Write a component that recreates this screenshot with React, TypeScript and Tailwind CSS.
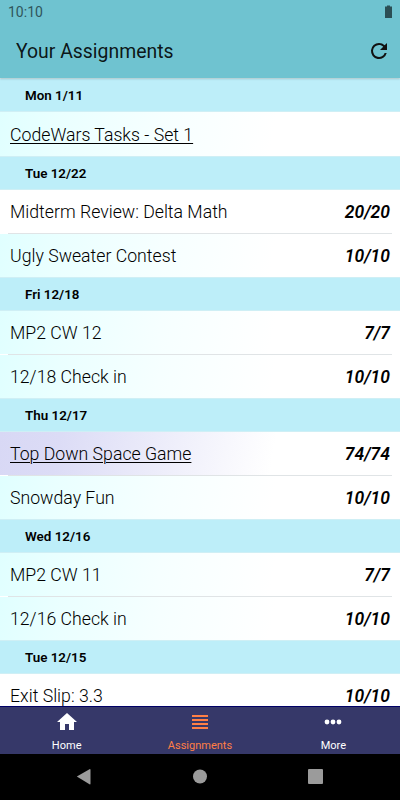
import React from "react";

type Tint = "none" | "cyan" | "violet";
type Item = { title: string; score?: string; tint: Tint; link?: boolean };
type Section = { date: string; items: Item[] };

const sections: Section[] = [
  { date: "Mon 1/11", items: [{ title: "CodeWars Tasks - Set 1", tint: "cyan", link: true }] },
  {
    date: "Tue 12/22",
    items: [
      { title: "Midterm Review: Delta Math", score: "20/20", tint: "none" },
      { title: "Ugly Sweater Contest", score: "10/10", tint: "cyan" },
    ],
  },
  {
    date: "Fri 12/18",
    items: [
      { title: "MP2 CW 12", score: "7/7", tint: "cyan" },
      { title: "12/18 Check in", score: "10/10", tint: "cyan" },
    ],
  },
  {
    date: "Thu 12/17",
    items: [
      { title: "Top Down Space Game", score: "74/74", tint: "violet", link: true },
      { title: "Snowday Fun", score: "10/10", tint: "cyan" },
    ],
  },
  {
    date: "Wed 12/16",
    items: [
      { title: "MP2 CW 11", score: "7/7", tint: "cyan" },
      { title: "12/16 Check in", score: "10/10", tint: "cyan" },
    ],
  },
  { date: "Tue 12/15", items: [{ title: "Exit Slip: 3.3", score: "10/10", tint: "none" }] },
];

const tints: Record<Tint, string> = {
  none: "bg-white",
  cyan: "bg-[linear-gradient(100deg,#e0ffff_0%,#eaffff_15%,#f6ffff_40%,#ffffff_68%)]",
  violet: "bg-[linear-gradient(100deg,#d8d8f5_0%,#dcdcf6_15%,#ffffff_68%)]",
};

function Row({ item, divided }: { item: Item; divided: boolean }) {
  return (
    <div className="flex h-[43.5px] flex-col bg-white">
      {divided && <div className="mx-2 h-px shrink-0 bg-[#e0e4e6]" />}
      <div
        className={`flex flex-1 items-center justify-between px-[10px] text-black ${
          divided ? "pt-px" : "pt-[2px]"
        } ${tints[item.tint]}`}
      >
        <span
          className={`text-[17.7px] leading-6 font-light whitespace-nowrap ${
            item.link ? "underline decoration-1 underline-offset-2" : ""
          }`}
        >
          {item.title}
        </span>
        <span className="text-[17.5px] leading-6 font-semibold italic">{item.score}</span>
      </div>
    </div>
  );
}

export default function App() {
  return (
    <div className="flex h-[800px] w-[400px] flex-col overflow-hidden bg-white font-['Roboto',sans-serif]">
      <header className="z-10 h-[78px] shrink-0 bg-[#6fc3d0] shadow-[0_1px_2px_rgba(0,0,0,0.18)]">
        <div className="flex h-6 items-center justify-between pr-[7px] pl-2 text-[#2f555b]">
          <span className="text-[14px] leading-6">10:10</span>
          <svg width="9" height="14" viewBox="0 0 9 14" className="fill-[#2b4e54]">
            <path d="M1 1.5h2V.5h3v1h2v11.5H1z" />
          </svg>
        </div>
        <div className="flex h-[54px] items-center justify-between pr-[9.5px] pl-4">
          <h1 className="pt-[2px] text-[19.4px] leading-6 font-normal text-black/90">Your Assignments</h1>
          <svg width="24" height="24" viewBox="0 0 24 24" className="fill-[#111]">
            <path d="M17.65 6.35A7.96 7.96 0 0 0 12 4a8 8 0 1 0 7.73 10h-2.08A6 6 0 1 1 12 6c1.66 0 3.14.69 4.22 1.78L13 11h7V4z" />
          </svg>
        </div>
      </header>

      <main className="min-h-0 flex-1 overflow-hidden">
        {sections.map((s) => (
          <section key={s.date}>
            <h2 className="flex h-[34px] items-center border-y border-[#cfeff5] bg-[#bdeef9] pt-[2.7px] pl-[25px] text-[13.4px] font-semibold text-black">
              {s.date}
            </h2>
            {s.items.map((item, i) => (
              <Row key={item.title} item={item} divided={i > 0} />
            ))}
          </section>
        ))}
      </main>

      <nav className="grid h-[48px] shrink-0 grid-cols-3 border-t border-[#000066] bg-[#363869] text-[11px] text-white">
        <div className="flex flex-col items-center">
          <svg width="24" height="24" viewBox="0 0 24 24" className="mt-[3px] fill-white">
            <path d="M10 20v-6h4v6h5v-8h3L12 3 2 12h3v8z" />
          </svg>
          <span className="mt-[5px] leading-[14px]">Home</span>
        </div>
        <div className="flex flex-col items-center text-[#ff7f45]">
          <svg width="24" height="24" viewBox="0 0 24 24" className="mt-[3px] fill-[#ff7f45]">
            <path d="M4 5h16v2H4zM4 9h16v2H4zM4 13h16v2H4zM4 17h16v2H4z" />
          </svg>
          <span className="mt-[5px] leading-[14px]">Assignments</span>
        </div>
        <div className="flex flex-col items-center">
          <svg width="24" height="24" viewBox="0 0 24 24" className="mt-[3px] fill-white">
            <circle cx="6" cy="12" r="2.4" />
            <circle cx="12" cy="12" r="2.4" />
            <circle cx="18" cy="12" r="2.4" />
          </svg>
          <span className="mt-[5px] leading-[14px]">More</span>
        </div>
      </nav>

      <footer className="h-[46px] shrink-0 bg-black">
        <svg width="400" height="46" viewBox="0 0 400 46" className="fill-[#9b9b9b]">
          <path d="M76.8 22.5 89.5 15.2q1-.4 1 .8v13.5q0 1.200-1 .8z" />
          <circle cx="200" cy="22.500" r="7" />
          <rect x="308" y="15" width="15" height="15" rx="1" />
        </svg>
      </footer>
    </div>
  );
}
